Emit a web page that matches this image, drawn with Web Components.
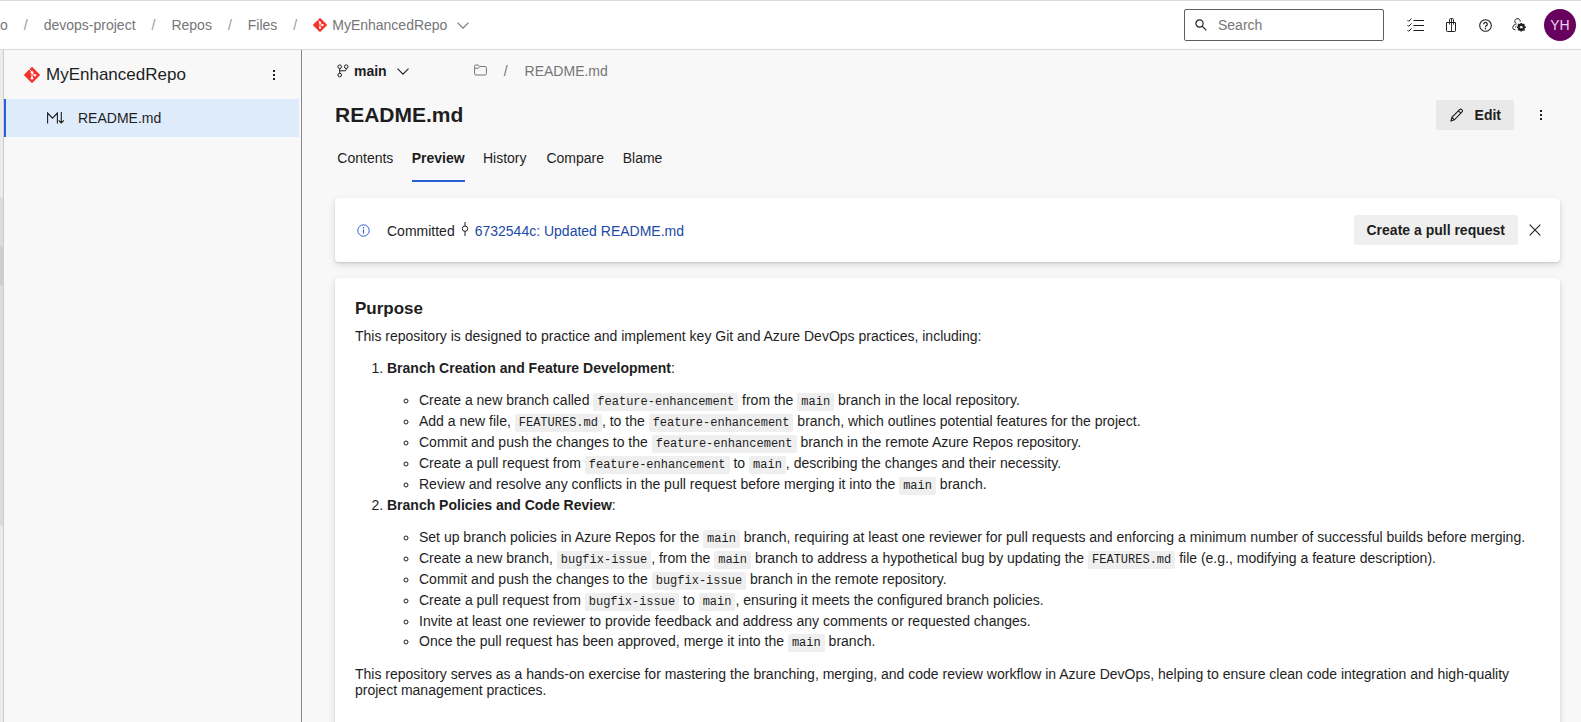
<!DOCTYPE html>
<html lang="en">
<head>
<meta charset="utf-8">
<title>README.md - MyEnhancedRepo</title>
<style>
  html, body { margin: 0; height: 100%; }
  body {
    font: 14px "Liberation Sans", Arial, sans-serif;
    color: #1e1e1e;
    background: #f8f8f8;
    overflow: hidden;
    --accent: #2b5fd9;
    --muted: #767676;
    --line: #dcdcdc;
  }
</style>
</head>
<body>
<app-shell>
  <top-bar slot="top"></top-bar>
  <nav-rail slot="rail"></nav-rail>
  <repo-tree slot="tree" name="MyEnhancedRepo"></repo-tree>
  <file-header name="README.md"></file-header>
  <commit-banner></commit-banner>
  <markdown-card>
    <h3>Purpose</h3>
    <p>This repository is designed to practice and implement key Git and Azure DevOps practices, including:</p>
    <ol>
      <li><strong>Branch Creation and Feature Development</strong>:
        <ul>
          <li>Create a new branch called <code>feature-enhancement</code> from the <code>main</code> branch in the local repository.</li>
          <li>Add a new file, <code>FEATURES.md</code>, to the <code>feature-enhancement</code> branch, which outlines potential features for the project.</li>
          <li>Commit and push the changes to the <code>feature-enhancement</code> branch in the remote Azure Repos repository.</li>
          <li>Create a pull request from <code>feature-enhancement</code> to <code>main</code>, describing the changes and their necessity.</li>
          <li>Review and resolve any conflicts in the pull request before merging it into the <code>main</code> branch.</li>
        </ul>
      </li>
      <li><strong>Branch Policies and Code Review</strong>:
        <ul>
          <li>Set up branch policies in Azure Repos for the <code>main</code> branch, requiring at least one reviewer for pull requests and enforcing a minimum number of successful builds before merging.</li>
          <li>Create a new branch, <code>bugfix-issue</code>, from the <code>main</code> branch to address a hypothetical bug by updating the <code>FEATURES.md</code> file (e.g., modifying a feature description).</li>
          <li>Commit and push the changes to the <code>bugfix-issue</code> branch in the remote repository.</li>
          <li>Create a pull request from <code>bugfix-issue</code> to <code>main</code>, ensuring it meets the configured branch policies.</li>
          <li>Invite at least one reviewer to provide feedback and address any comments or requested changes.</li>
          <li>Once the pull request has been approved, merge it into the <code>main</code> branch.</li>
        </ul>
      </li>
    </ol>
    <p>This repository serves as a hands-on exercise for mastering the branching, merging, and code review workflow in Azure DevOps, helping to ensure clean code integration and high-quality project management practices.</p>
  </markdown-card>
</app-shell>

<script>
const base = `
  :host, *, *::before, *::after { box-sizing: border-box; }
  a { color: inherit; text-decoration: none; }
  button { font: inherit; color: inherit; border: 0; background: none; padding: 0; cursor: pointer;
           display: inline-flex; align-items: center; justify-content: center; }
`;

function define(name, render) {
  customElements.define(name, class extends HTMLElement {
    connectedCallback() {
      if (this.shadowRoot) return;
      this.attachShadow({ mode: 'open' }).innerHTML = render(this);
    }
  });
}

/* Icons: [viewBox width, viewBox height, markup] */
const icons = {
  git: [16, 16, `<path fill="#f8312a" d="M7.2.5a1.1 1.1 0 0 1 1.6 0l6.7 6.7a1.1 1.1 0 0 1 0 1.6l-6.7 6.7a1.1 1.1 0 0 1-1.6 0L.5 8.8a1.1 1.1 0 0 1 0-1.600z"/><path d="M5.500 2.500 8 5v6.200M8 5.500l2.700 2.700" fill="none" stroke="#fff" stroke-width="1"/><g fill="#fff"><circle cx="8" cy="5.200" r="1.300"/><circle cx="8" cy="11.200" r="1.300"/><circle cx="10.900" cy="8.200" r="1.300"/></g>`],
  chevron: [12, 7, `<path d="M.5.6 6 6.100 11.500.6" fill="none" stroke="currentColor" stroke-width="1.100"/>`],
  search: [12, 12, `<circle cx="4.500" cy="4.500" r="3.600" fill="none" stroke="currentColor" stroke-width="1.200"/><path d="M7.200 7.200 11.300 11.300" stroke="currentColor" stroke-width="1.200"/>`],
  checklist: [17, 14, `<path d="M6.500 2.500H17M6.500 7.500H17M6.500 12.500H17" stroke="currentColor" stroke-width="1"/><path d="M.5 2.100l1.200 1.200L4.500.5M.5 7.100l1.200 1.200 2.800-2.800M.5 12.100l1.200 1.200 2.800-2.800" fill="none" stroke="currentColor" stroke-width="1"/>`],
  bag: [10, 14, `<path d="M.5 4.500h9v8.200q0 .8-.8.8H1.300q-.8 0-.8-.8z" fill="none" stroke="currentColor"/><path d="M3.500 6.500V1.800Q3.500.5 4.800.5h1.400q1.300 0 1.300 1.300v4.700M5.500 1v12.500" fill="none" stroke="currentColor" stroke-width=".9"/>`],
  help: [13, 13, `<circle cx="6.500" cy="6.500" r="5.800" fill="none" stroke="currentColor" stroke-width="1.100"/><path d="M4.700 5.200a1.800 1.800 0 1 1 2.900 1.400q-1.100.7-1.100 1.600" fill="none" stroke="currentColor" stroke-width="1.200"/><circle cx="6.500" cy="9.700" r=".75" fill="currentColor"/>`],
  usergear: [14, 14, `<path d="M3.400 5A2.700 2.700 0 1 1 8.200 3.600M3.400 4.800 4.600 5.900M3.800 6.200Q.7 7 .7 9.500q0 2.400 2.800 2.400M4.400 8.300 3.200 9.300" fill="none" stroke="currentColor"/><circle cx="9.200" cy="9.200" r="2.600" fill="none" stroke="currentColor" stroke-width="2.200"/><path d="M9.200 4.900v8.600M4.900 9.200h1.500M12 9.200h1.900M6.100 6.100l1 1M11.300 11.300l1.200 1.200M12.300 6.100l-1 1M7.100 11.300l-1 1" stroke="currentColor" stroke-width="1.500"/><circle cx="9.200" cy="9.200" r="1.100" fill="#fff"/>`],
  dots: [4, 12, `<g fill="currentColor"><rect x="1" y="1" width="2" height="2"/><rect x="1" y="5" width="2" height="2"/><rect x="1" y="9" width="2" height="2"/></g>`],
  markdown: [17, 12, `<path d="M.6 11.500V1l4.900 5.200L10.400 1v10.500M14.300 0v11M11.700 8.300l2.600 2.700 2.600-2.700" fill="none" stroke="currentColor" stroke-width="1.100"/>`],
  branch: [12, 14, `<g fill="none" stroke="currentColor"><circle cx="2.700" cy="2.700" r="1.800"/><circle cx="9.200" cy="2.700" r="1.800"/><circle cx="2.700" cy="11" r="1.800"/><path d="M2.700 4.500v4.700M9.200 4.500v1q0 1.300-1.300 1.300H2.700"/></g>`],
  folder: [13, 12, `<path d="M.6 9.800V2.200Q.6 1 1.800 1h2.400l1.500 1.500h5.500q1.200 0 1.200 1.200v6.100q0 1.200-1.200 1.200H1.800Q.6 11 .6 9.800zM.6 4.300h3.600l1.500-1.800" fill="none" stroke="currentColor"/>`],
  pencil: [14, 14, `<path d="M1 13l.9-3.700 7.700-7.700q1-1 2.200.1t.2 2.200L4.400 11.800zM1.900 9.300l2.500 2.500M8.500 2.800l2.500 2.500" fill="none" stroke="currentColor" stroke-width="1.100"/>`],
  info: [13, 13, `<circle cx="6.500" cy="6.500" r="5.700" fill="none" stroke="currentColor"/><path d="M6.500 5.500v4" stroke="currentColor" stroke-width="1.200"/><circle cx="6.500" cy="3.700" r=".8" fill="currentColor"/>`],
  commit: [8, 14, `<path d="M4 0v4M4 9.500V14" stroke="currentColor"/><circle cx="4" cy="6.700" r="2.700" fill="none" stroke="currentColor"/>`],
  close: [12, 12, `<path d="M.7.7l10.600 10.600M11.300.7.7 11.300" stroke="currentColor" stroke-width="1.100"/>`]
};

define('ui-icon', el => {
  const [w, h, body] = icons[el.getAttribute('name')];
  const width = Number(el.getAttribute('size')) || w;
  const height = Math.round(width * h / w);
  return `<style>:host{display:inline-flex;flex:none} svg{display:block}</style>
    <svg width="${width}" height="${height}" viewBox="0 0 ${w} ${h}" aria-hidden="true">${body}</svg>`;
});

define('app-shell', () => `<style>${base}
  :host { display: flex; flex-direction: column; height: 100vh; }
  .body { flex: 1; min-height: 0; display: flex; }
  main { flex: 1; min-width: 0; display: flex; flex-direction: column; gap: 16px;
         padding: 0 21px 0 33px; overflow: hidden; }
  ::slotted(*) { flex: none; }
</style>
<slot name="top"></slot>
<div class="body"><slot name="rail"></slot><slot name="tree"></slot><main><slot></slot></main></div>`);

define('top-bar', () => `<style>${base}
  :host { display: flex; align-items: center; height: 50px; background: #fff; padding-right: 5px;
          border-top: 1px solid var(--line); border-bottom: 1px solid var(--line); }
  nav { display: flex; align-items: center; gap: 16px; color: var(--muted); flex: 1; }
  nav span { color: #999; }
  .repo { display: inline-flex; align-items: center; gap: 5px; }
  nav button { margin-left: -6px; }
  label { display: flex; align-items: center; gap: 11px; width: 200px; height: 32px; padding: 0 10px;
          border: 1px solid #605e5c; border-radius: 2px; }
  input { flex: 1; min-width: 0; border: 0; outline: 0; padding: 0; background: none; font: inherit; color: inherit; }
  input::placeholder { color: #767676; opacity: 1; }
  .tools { display: flex; align-items: center; margin-left: 12px; }
  .tools button { width: 34px; height: 32px; }
  .tools button:first-child { width: 38px; }
  .avatar { width: 32px; height: 32px; margin-left: 8px; border-radius: 50%; background: #68005f; color: #f0d0ee; }
</style>
<nav aria-label="Breadcrumb">
  <a href="#">o</a><span>/</span><a href="#">devops-project</a><span>/</span><a href="#">Repos</a><span>/</span><a href="#">Files</a><span>/</span>
  <a href="#" class="repo"><ui-icon name="git" size="14"></ui-icon>MyEnhancedRepo</a>
  <button aria-label="Switch repository"><ui-icon name="chevron"></ui-icon></button>
</nav>
<label><ui-icon name="search"></ui-icon><input type="search" placeholder="Search" aria-label="Search"></label>
<div class="tools">
  <button aria-label="Work items"><ui-icon name="checklist"></ui-icon></button>
  <button aria-label="Marketplace"><ui-icon name="bag"></ui-icon></button>
  <button aria-label="Help"><ui-icon name="help"></ui-icon></button>
  <button aria-label="User settings"><ui-icon name="usergear"></ui-icon></button>
</div>
<button class="avatar" aria-label="Account">YH</button>`);

define('nav-rail', () => `<style>${base}
  :host { width: 4px; background: #ebebeb; border-right: 1px solid #ccc; padding-top: 148px; }
  .group { height: 328px; background: #dcdcdc; padding-top: 48px; }
  .current { height: 40px; background: #cecece; border-radius: 0 2px 2px 0; }
</style><div class="group"><div class="current"></div></div>`);

define('repo-tree', el => `<style>${base}
  :host { display: block; width: 298px; border-right: 1px solid #888; padding-right: 2px; }
  header { display: flex; align-items: center; gap: 6px; height: 49px; padding: 0 21px 0 20px; }
  h2 { flex: 1; margin: 0; font-size: 17px; font-weight: 400; line-height: 20px; }
  header button { width: 8px; height: 24px; }
  a { display: flex; align-items: center; gap: 14px; height: 38px; padding-left: 41px;
      background: #deebfa; border-left: 2px solid var(--accent); }
</style>
<header><ui-icon name="git"></ui-icon><h2>${el.getAttribute('name')}</h2>
  <button aria-label="More options"><ui-icon name="dots"></ui-icon></button></header>
<a href="#"><ui-icon name="markdown"></ui-icon>README.md</a>`);

define('tab-list', el => {
  const active = el.getAttribute('active');
  const tabs = el.getAttribute('tabs').split(',');
  return `<style>${base}
  :host { display: flex; gap: 16px; }
  a { display: flex; flex-direction: column; align-items: center; height: 48px; line-height: 48px;
      border-bottom: 2px solid transparent; }
  a::after { content: attr(title); font-weight: 700; height: 0; visibility: hidden; overflow: hidden; }
  a.on { font-weight: 700; border-color: var(--accent); }
</style>` + tabs.map(t =>
    `<a href="#" title="${t}" class="${t === active ? 'on' : ''}">${t}</a>`).join('');
});

define('file-header', el => `<style>${base}
  :host { display: block; }
  .path { display: flex; align-items: center; height: 42px; padding-left: 2px; color: var(--muted); gap: 17px; }
  .branch { gap: 5px; color: #1e1e1e; font-weight: 700; margin-right: 48px; }
  .branch ui-icon:last-child { margin-left: 5px; }
  .title { display: flex; align-items: center; height: 46px; }
  h1 { flex: 1; margin: 0; font-size: 21px; line-height: 28px; }
  .edit { gap: 11px; height: 30px; padding: 0 13px 0 14px; background: #e9e9e9; border-radius: 2px; font-weight: 700; }
  .more { width: 24px; height: 30px; margin: 0 7px 0 15px; }
  tab-list { margin-top: -4px; }
</style>
<div class="path">
  <button class="branch"><ui-icon name="branch"></ui-icon><span>main</span><ui-icon name="chevron"></ui-icon></button>
  <a href="#" aria-label="Root folder"><ui-icon name="folder"></ui-icon></a><span>/</span><a href="#">${el.getAttribute('name')}</a>
</div>
<div class="title">
  <h1>${el.getAttribute('name')}</h1>
  <button class="edit"><ui-icon name="pencil"></ui-icon>Edit</button>
  <button class="more" aria-label="More actions"><ui-icon name="dots"></ui-icon></button>
</div>
<tab-list tabs="Contents,Preview,History,Compare,Blame" active="Preview"></tab-list>`);

const card = `background: #fff; border-radius: 4px; box-shadow: 0 3px 7px rgba(0,0,0,.13), 0 1px 2px rgba(0,0,0,.11);`;

define('commit-banner', () => `<style>${base}
  :host { display: flex; align-items: center; height: 64px; padding: 0 19px 0 22px; ${card} }
  .info { color: var(--accent); margin-right: 17px; }
  p { flex: 1; margin: 0; padding-top: 2px; display: flex; align-items: center; gap: 6px; }
  p ui-icon { padding-bottom: 4px; }
  p a { color: #2149a8; }
  .pr { height: 30px; padding: 0 13px; background: #efefef; border-radius: 2px; font-weight: 700; margin-right: 11px; }
</style>
<ui-icon class="info" name="info"></ui-icon>
<p>Committed <ui-icon name="commit"></ui-icon><a href="#">6732544c: Updated README.md</a></p>
<button class="pr">Create a pull request</button>
<button aria-label="Dismiss"><ui-icon name="close"></ui-icon></button>`);

/* The document's own markup is moved into the card's root so its nested lists share one stylesheet. */
define('markdown-card', el => {
  const content = el.innerHTML;
  el.textContent = '';
  return `<style>${base}
  :host { display: block; padding: 20px 20px 64px; ${card} }
  h3 { margin: 0 0 8px; font-size: 17px; line-height: 22px; }
  p { margin: 0 0 16px; }
  ol, ul { margin: 16px 0; padding-left: 32px; }
  ul { margin-bottom: 0; }
  li + li { margin-top: 4px; }
  code { font: 12px "Liberation Mono", monospace; background: #efefef; border-radius: 2px; padding: 2px 4px; }
</style>${content}`;
});
</script>
</body>
</html>
